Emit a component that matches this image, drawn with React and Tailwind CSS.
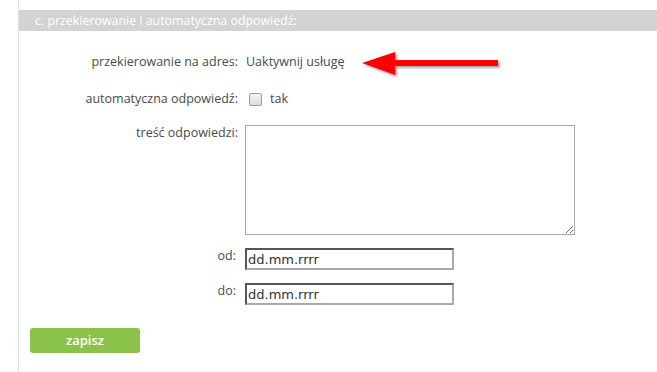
import React from "react";

function Arrow() {
  return (
    <svg
      className="absolute left-[356px] top-[48px]"
      width="152"
      height="34"
      viewBox="0 0 152 34"
    >
      <defs>
        <filter id="sh" x="-10%" y="-30%" width="130%" height="180%">
          <feDropShadow dx="2" dy="2" stdDeviation="1.3" floodColor="#000" floodOpacity="0.35" />
        </filter>
      </defs>
      <g filter="url(#sh)">
        <polygon points="6,15 39,4 39,12 142,12 142,18 39,18 39,27" fill="#ff0000" />
      </g>
    </svg>
  );
}

export default function App() {
  return (
    <div
      className="relative w-[657px] h-[372px] bg-white overflow-hidden text-[12.5px] text-[#4a4a4a]"
      style={{ fontFamily: '"Open Sans", "Noto Sans", sans-serif' }}
    >
      <div className="ml-[18px] h-full border-l border-[#d9e1ea] pt-[10px] flex flex-col">
        <div className="h-[21px] bg-[#d3d3d3] text-white pl-[16px] leading-[21px] text-[12.4px]">
          c. przekierowanie i automatyczna odpowiedź:
        </div>

        <div className="grid grid-cols-[219px_1fr] gap-x-[7px] mt-[22px]">
          <div className="text-right leading-[18px]">przekierowanie na adres:</div>
          <div className="leading-[18px] pl-[1px]">Uaktywnij usługę</div>
        </div>

        <div className="grid grid-cols-[219px_1fr] gap-x-[7px] mt-[19px]">
          <div className="text-right leading-[18px]">automatyczna odpowiedź:</div>
          <div className="flex items-center h-[18px]">
            <input
              type="checkbox"
              className="appearance-none ml-[4px] w-[13px] h-[13px] border border-[#9a9a9a] rounded-[2px] bg-gradient-to-b from-[#f4f4f4] to-[#dcdcdc]"
            />
            <span className="ml-[8px] leading-[18px]">tak</span>
          </div>
        </div>

        <div className="grid grid-cols-[219px_1fr] gap-x-[7px] mt-[17px]">
          <div className="text-right leading-[18px] -mt-[1px]">treść odpowiedzi:</div>
          <textarea className="w-[330px] h-[110px] border border-[#a9a9a9] bg-white outline-none block" />
        </div>

        <div className="grid grid-cols-[217px_1fr] gap-x-[9px] mt-[13px]">
          <div className="text-right leading-[18px] -mt-[1px]">od:</div>
          <input
            type="text"
            defaultValue="dd.mm.rrrr"
            className="w-[209px] h-[22px] border-2 border-t-[#555555] border-l-[#555555] border-b-[#a8a8a8] border-r-[#a8a8a8] px-[1px] text-[13px] text-[#333] outline-none"
            style={{ fontFamily: '"DejaVu Sans", Verdana, sans-serif' }}
          />
        </div>

        <div className="grid grid-cols-[217px_1fr] gap-x-[9px] mt-[13px]">
          <div className="text-right leading-[18px] -mt-[1px]">do:</div>
          <input
            type="text"
            defaultValue="dd.mm.rrrr"
            className="w-[209px] h-[22px] border-2 border-t-[#555555] border-l-[#555555] border-b-[#a8a8a8] border-r-[#a8a8a8] px-[1px] text-[13px] text-[#333] outline-none"
            style={{ fontFamily: '"DejaVu Sans", Verdana, sans-serif' }}
          />
        </div>

        <div className="mt-[23px] ml-[11px]">
          <button className="w-[110px] h-[25px] rounded-[3px] bg-[#8bc34a] text-white font-semibold text-[13px] leading-[25px]">
            zapisz
          </button>
        </div>
      </div>
      <Arrow />
    </div>
  );
}
